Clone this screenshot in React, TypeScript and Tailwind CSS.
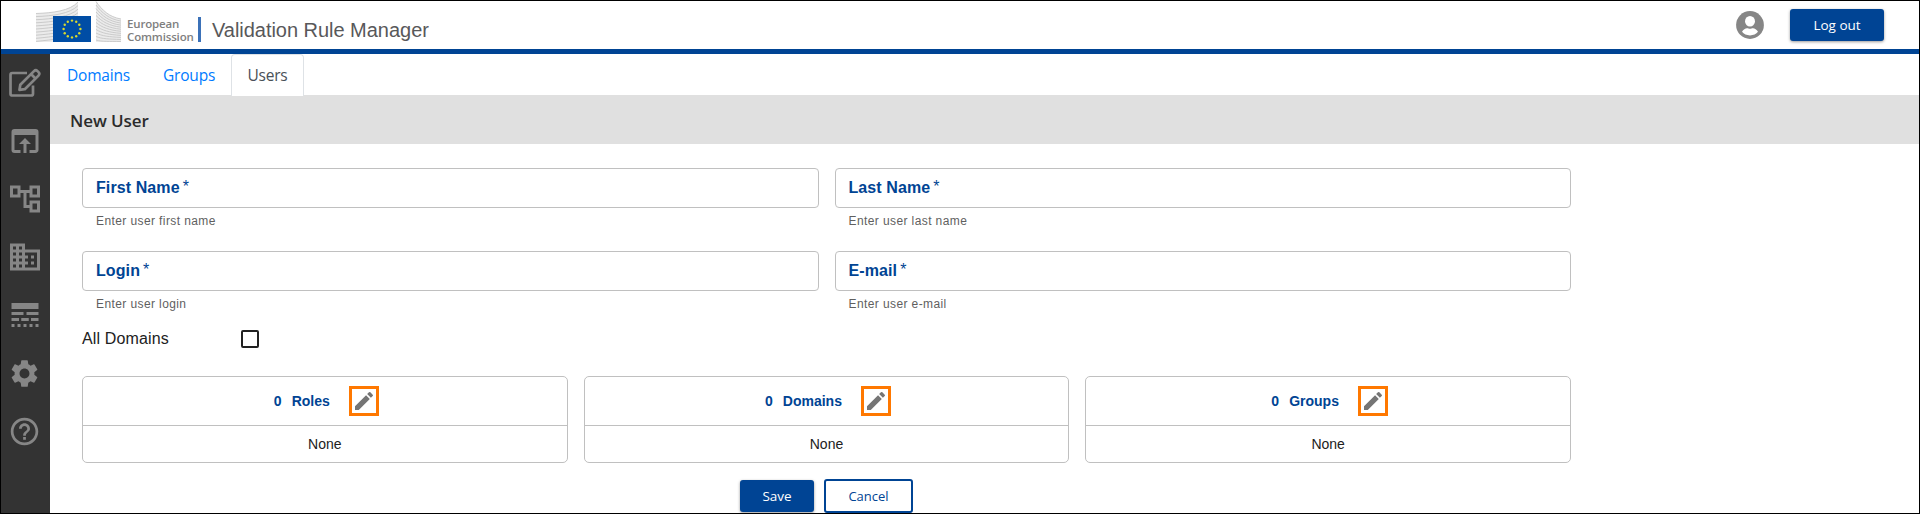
import React from "react";
import {
  MdDomain,
  MdEdit,
  MdHelpOutline,
  MdLineStyle,
  MdOpenInBrowser,
  MdOutlineAccountTree,
  MdSettings,
} from "react-icons/md";

const stars = Array.from({ length: 12 }, (_, i) => {
  const a = (i * Math.PI) / 6;
  return { x: 36 + 8.4 * Math.sin(a), y: 28 - 8.4 * Math.cos(a) };
});

function CommissionLogo() {
  return (
    <svg width="90" height="42" viewBox="0 0 90 42" className="block shrink-0" aria-hidden="true">
      <path d="M0 12.500C16 12 34 10 42 1V41H0z" fill="#ebebeb" />
      <path d="M60 0.500C66 9 73 16 85 18V41H60z" fill="#ebebeb" />
      <g fill="none" stroke="#c6c6c6" strokeWidth="0.9">
        {Array.from({ length: 10 }, (_, i) => (
          <path
            key={i}
            d={`M0 ${12.5 + i * 3.1}C16 ${12 + i * 3} 34 ${10 + i * 2.9} 42 ${1 + i * 3.6}`}
          />
        ))}
        {Array.from({ length: 12 }, (_, i) => (
          <path
            key={i}
            d={`M60 ${0.5 + i * 3.5}C66 ${9 + i * 2.9} 73 ${16 + i * 2.2} 85 ${18 + i * 2.05}`}
          />
        ))}
      </g>
      <rect x="17" y="15" width="38" height="26" fill="#004da5" />
      <rect x="55" y="12" width="5" height="30" fill="#fff" />
      <g fill="#d9d92e">
        {stars.map((s, i) => (
          <circle key={i} cx={s.x} cy={s.y} r="1.2" />
        ))}
      </g>
    </svg>
  );
}

function ComposeIcon() {
  return (
    <svg width="34" height="30" viewBox="0 0 34 30" fill="none" stroke="currentColor" strokeWidth="2.7" strokeLinejoin="round">
      <path d="M19 5H4.300a1.800 1.800 0 0 0-1.800 1.800V25.700a1.800 1.800 0 0 0 1.800 1.800H23.200a1.800 1.800 0 0 0 1.800-1.800V17.500" />
      <path d="M11.500 21.800l.8-5L26 3.100a2.500 2.500 0 0 1 3.500 0l1 1a2.500 2.500 0 0 1 0 3.500L16.800 21.200zM23 6l4.700 4.700" />
    </svg>
  );
}

function AccountIcon() {
  return (
    <svg width="28" height="28" viewBox="0 0 28 28" aria-hidden="true">
      <circle cx="14" cy="14" r="13.900" fill="#868686" />
      <ellipse cx="14" cy="10.300" rx="5" ry="5.300" fill="#fff" />
      <path d="M6 20.800c1.300-2.300 3.300-3.600 5-3.600 1 0 1.800.6 3 .6s2-.6 3-.6c1.700 0 3.700 1.300 5 3.600-1.800 2.300-4.700 3.600-8 3.600s-6.200-1.300-8-3.600z" fill="#fff" />
    </svg>
  );
}

const navItems = [
  { name: "Rules", icon: <ComposeIcon /> },
  { name: "Open", icon: <MdOpenInBrowser size={36} /> },
  { name: "Tree", icon: <MdOutlineAccountTree size={36} /> },
  { name: "Organisation", icon: <MdDomain size={36} /> },
  { name: "Styles", icon: <MdLineStyle size={36} /> },
  { name: "Settings", icon: <MdSettings size={33} /> },
  { name: "Help", icon: <MdHelpOutline size={33} /> },
];

function Field({ label, hint }: { label: string; hint: string }) {
  return (
    <div className="h-[83px]">
      <div className="flex h-10 items-center rounded-[4px] border border-[#c0c0c0] pl-[13px] text-base leading-5 text-[#004494]">
        <span className="font-bold tracking-[0.1px]">{label}</span>
        <span className="ml-[3px] pb-[2px]">*</span>
      </div>
      <div className="pt-[3px] pl-[14px] text-xs leading-5 tracking-[0.4px] text-[#5f5f5f]">{hint}</div>
    </div>
  );
}

function AssignCard({ title }: { title: string }) {
  return (
    <section className="h-[87px] rounded-[5px] border border-[#c0c0c0] text-sm">
      <div className="flex h-[49px] items-center justify-center border-b border-[#c0c0c0] pl-[3px] font-bold text-[#004494]">
        <span>0</span>
        <span className="ml-[10px]">{title}</span>
        <button className="ml-[19px] flex size-[30px] items-center justify-center border-[3px] border-[#ff7800] text-[#757575]">
          <MdEdit size={24} className="shrink-0" />
        </button>
      </div>
      <div className="flex h-9 items-center justify-center text-[#212121]">None</div>
    </section>
  );
}

export default function App() {
  return (
    <div className="flex h-[514px] flex-col overflow-hidden border border-black bg-white font-['Liberation_Sans',sans-serif]">
      <header className="flex h-[53px] shrink-0 justify-between border-b-5 border-[#004494]">
        <div className="flex pl-[35px]">
          <CommissionLogo />
          <div className="w-[68px] pt-[16px] pl-px font-['Open_Sans',sans-serif] text-[11.5px] leading-[13px] font-semibold tracking-[-0.15px] text-[#808080]">
            European
            <br />
            Commission
          </div>
          <div className="mt-4 ml-[4px] h-[25px] w-[3px] bg-[#3b71b8]" />
          <h1 className="ml-[11px] pt-[17px] text-[20px] leading-6 tracking-[-0.03px] text-[#58585a]">Validation Rule Manager</h1>
        </div>
        <div className="flex pr-[35px]">
          <div className="mt-[10px] mr-[26px]">
            <AccountIcon />
          </div>
          <button className="mt-2 h-8 w-[94px] rounded-[3px] bg-[#004494] font-['Open_Sans',sans-serif] text-[13.5px] text-white shadow-[0_1px_3px_rgba(0,0,0,0.4)]">
            Log out
          </button>
        </div>
      </header>
      <div className="flex min-h-0 flex-1">
        <nav className="flex w-[49px] shrink-0 flex-col bg-[#333] pr-[2px] text-[#868686]">
          {navItems.map((n) => (
            <a key={n.name} aria-label={n.name} className="flex h-[58px] shrink-0 items-center justify-center">
              {n.icon}
            </a>
          ))}
        </nav>
        <main className="flex min-w-0 flex-1 flex-col">
          <div className="flex h-[41px] shrink-0 font-['Open_Sans',sans-serif] text-[15.5px] leading-[42px] tracking-[-0.2px] text-[#007bff]">
            <a className="w-[96px] pl-[17px]">Domains</a>
            <a className="w-[85px] pl-[17px]">Groups</a>
            <a className="z-10 h-[42px] w-[73px] rounded-t-[4px] border border-b-0 border-[#dee2e6] bg-white text-center leading-[41px] text-[#495057]">
              Users
            </a>
          </div>
          <h2 className="h-[49px] shrink-0 bg-[#e0e0e0] pl-5 font-['Open_Sans',sans-serif] text-[17px] leading-[51px] font-semibold tracking-[-0.1px] text-[#2b2b2b]">
            New User
          </h2>
          <div className="ml-8 w-[1489px] pt-6">
            <div className="grid grid-cols-2 gap-x-4">
              <Field label="First Name" hint="Enter user first name" />
              <Field label="Last Name" hint="Enter user last name" />
              <Field label="Login" hint="Enter user login" />
              <Field label="E-mail" hint="Enter user e-mail" />
            </div>
            <div className="flex h-[42px] text-base leading-[10px] text-[#212121]">
              <span className="w-[159px] tracking-[0.15px]">All Domains</span>
              <span className="-mt-1 size-[18px] rounded-[2px] border-2 border-[#212121]" />
            </div>
            <div className="grid grid-cols-3 gap-4">
              <AssignCard title="Roles" />
              <AssignCard title="Domains" />
              <AssignCard title="Groups" />
            </div>
            <div className="flex pt-4 pl-[658px] font-['Open_Sans',sans-serif] text-[13.5px]">
              <button className="mt-px h-8 w-[74px] rounded-[3px] bg-[#004494] text-white shadow-[0_1px_3px_rgba(0,0,0,0.4)]">
                Save
              </button>
              <button className="ml-[10px] h-[34px] w-[89px] rounded-[3px] border-2 border-[#004494] pt-px text-[13px] text-[#004494]">
                Cancel
              </button>
            </div>
          </div>
        </main>
      </div>
    </div>
  );
}
